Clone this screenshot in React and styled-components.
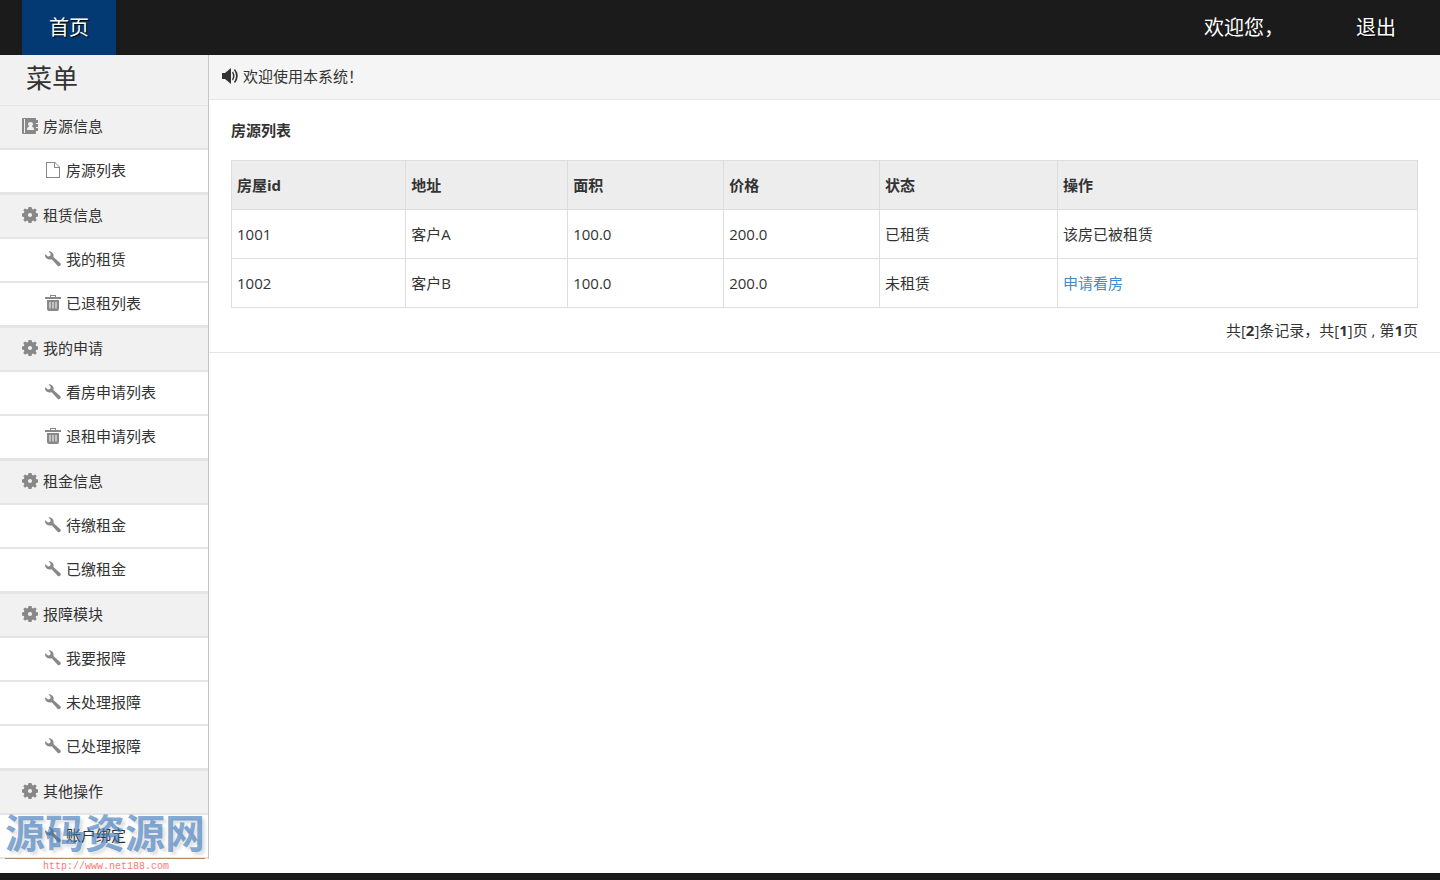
import React from 'react'
import styled, { createGlobalStyle } from 'styled-components'

const GlobalStyle = createGlobalStyle`
  * {
    box-sizing: border-box;
  }
  body {
    margin: 0;
    background: #fff;
    color: #333;
    font-family: "Open Sans", "Noto Sans CJK SC", sans-serif;
    font-size: 15px;
    line-height: 24px;
  }
  a {
    color: inherit;
    text-decoration: none;
  }
`

const Page = styled.div`
  min-height: 100vh;
  display: flex;
  flex-direction: column;
`
const Topbar = styled.header`
  height: 55px;
  padding: 0 22px;
  background: #1b1b1b;
  display: flex;
  justify-content: space-between;
`
const TopLinks = styled.nav`
  display: flex;
`
const TopLink = styled.a`
  padding: 0 ${(props) => props.$pad}px;
  color: #fff;
  background: ${(props) => (props.$active ? '#033a73' : 'transparent')};
  font-size: 20px;
  line-height: 56px;
  height: 55px;
  text-shadow: 1px 1px 1px #000;
`
const Welcome = styled.span`
  padding-right: 50px;
  color: #fff;
  font-size: 20px;
  line-height: 56px;
`
const Body = styled.div`
  flex: 1;
  display: flex;
  align-items: flex-start;
  padding-bottom: 14px;
`
const Sidebar = styled.aside`
  width: 209px;
  flex-shrink: 0;
  position: relative;
  border-right: 1px solid #c6c6c6;
`
const MenuTitle = styled.h1`
  height: 51px;
  margin: 0;
  padding-left: 26px;
  border-bottom: 1px solid #e5e5e5;
  background: #f1f1f1;
  font-size: 26px;
  font-weight: 400;
  line-height: 46px;
`
const MenuList = styled.ul`
  margin: 0;
  padding: 0;
  list-style: none;
`
const MenuGroup = styled.li`
  border-bottom: 1px solid #e5e5e5;
  &:last-child {
    border-bottom: none;
  }
`
const MenuLink = styled.a`
  height: 44px;
  padding: 0 0 2px ${(props) => (props.$group ? 22 : 45)}px;
  border-bottom: 2px solid #e5e5e5;
  background: ${(props) => (props.$group ? '#f1f1f1' : '#fff')};
  display: flex;
  align-items: center;
  gap: 5px;
`
const IconSvg = styled.svg`
  width: 16px;
  height: 16px;
  flex-shrink: 0;
  fill: currentColor;
  color: ${(props) => props.$color || '#888'};
`
const Watermark = styled.div`
  position: absolute;
  left: 5px;
  bottom: -16px;
  width: 200px;
  pointer-events: none;
`
const WatermarkName = styled.div`
  padding-bottom: 7px;
  border-bottom: 1px solid #b08a6c;
  color: rgba(60, 122, 190, 0.64);
  font-family: "Noto Sans CJK SC", sans-serif;
  font-size: 40px;
  font-weight: 700;
  line-height: 40px;
  white-space: nowrap;
  text-shadow: 3px 3px 3px rgba(0, 0, 0, 0.12);
`
const WatermarkUrl = styled.div`
  padding-left: 38px;
  color: #f77;
  font-family: "Liberation Mono", monospace;
  font-size: 10px;
  line-height: 16px;
`
const Content = styled.main`
  flex: 1;
  border-bottom: 1px solid #e5e5e5;
`
const Notice = styled.div`
  height: 45px;
  padding: 0 13px 2px;
  border-bottom: 1px solid #e5e5e5;
  background: #f5f5f5;
  display: flex;
  align-items: center;
  gap: 5px;
`
const Panel = styled.section`
  padding: 18px 22px 10px;
`
const PanelTitle = styled.h2`
  margin: 0 0 18px;
  font-size: 15px;
  font-weight: 700;
  line-height: 24px;
`
const Table = styled.table`
  width: 100%;
  border-collapse: collapse;
  table-layout: fixed;
  th,
  td {
    height: 49px;
    padding: 0 6px 0 5px;
    border: 1px solid #ddd;
    text-align: left;
  }
  th {
    background: #ededed;
    font-weight: 700;
  }
`
const Col = styled.col`
  width: ${(props) => props.$width};
`
const ApplyLink = styled.a`
  color: #428bca;
`
const Pager = styled.p`
  margin: 10px 0 0;
  text-align: right;
`
const Footer = styled.footer`
  height: 7px;
  background: #1b1b1b;
`

const paths = {
  book: 'M1 0h13v2h2v3h-2v1h2v3h-2v1h2v3h-2v2q0 1-1 1H1q-1 0-1-1V1q0-1 1-1zM2 1v14h1V1zM5 12h7v-1q0-2-2-2.500V8q1-1 1-2 0-2-2.500-2T6 6q0 1 1 2v.5Q5 9 5 11z',
  file: 'M1 0h9l5 5v11H1zM2 1v14h12V6H9V1zM10 1v4h4z',
  cog: 'M6.500 0h3l.5 2 1.200.5L13 1.400 14.700 3l-1.100 1.800.5 1.200 1.900.5v3l-1.900.5-.5 1.200 1.100 1.800-1.700 1.700-1.800-1.200-1.200.5-.5 2h-3l-.5-2-1.200-.5L3 14.700 1.300 13l1.100-1.800L1.900 10 0 9.500v-3L1.900 6l.5-1.200L1.300 3 3 1.400l1.800 1.100L6 2zM8 5.900a2.100 2.100 0 1 0 0 4.200 2.100 2.100 0 0 0 0-4.200z',
  wrench: 'M.4 3.200 3 5.400l2.200-.5.5-2.200L3.500.2C6 0 8.700 1.700 8.600 4.700L8.400 6l7 6.200c1.300 1.600-.8 4-2.600 2.700L6.700 8.200C3.800 9.200.2 7.600 0 4.500z',
  trash: 'M5 0h6v2h5v2H0V2h5zM6 1v1h4V1zM2 5h12v9q0 2-2 2H4q-2 0-2-2zM4.500 7v6.500h1V7zM7.500 7v6.500h1V7zM10.500 7v6.500h1V7z',
  sound: 'M0 5h3l6-5v16l-6-5H0zM10 4.500l1-1q3 4.500 0 9l-1-1q2-3.500 0-7zM12 2l1-1q5.500 7 0 14l-1-1q4-6 0-12z',
}

const menu = [
  { name: '房源信息', icon: 'book', children: [['房源列表', 'file']] },
  { name: '租赁信息', icon: 'cog', children: [['我的租赁', 'wrench'], ['已退租列表', 'trash']] },
  { name: '我的申请', icon: 'cog', children: [['看房申请列表', 'wrench'], ['退租申请列表', 'trash']] },
  { name: '租金信息', icon: 'cog', children: [['待缴租金', 'wrench'], ['已缴租金', 'wrench']] },
  { name: '报障模块', icon: 'cog', children: [['我要报障', 'wrench'], ['未处理报障', 'wrench'], ['已处理报障', 'wrench']] },
  { name: '其他操作', icon: 'cog', children: [['账户绑定', 'wrench']] },
]

const columns = [
  ['房屋id', '14.7%'],
  ['地址', '13.65%'],
  ['面积', '13.15%'],
  ['价格', '13.15%'],
  ['状态', '15%'],
  ['操作', 'auto'],
]

const houses = [
  { id: 1001, address: '客户A', area: '100.0', price: '200.0', rented: true },
  { id: 1002, address: '客户B', area: '100.0', price: '200.0', rented: false },
]

const Icon = ({ name, color }) => (
  <IconSvg viewBox="0 0 16 16" $color={color} aria-hidden="true">
    <path fillRule="evenodd" d={paths[name]} />
  </IconSvg>
)

const Menu = () => (
  <Sidebar>
    <MenuTitle>菜单</MenuTitle>
    <MenuList>
      {menu.map((group) => (
        <MenuGroup key={group.name}>
          <MenuLink href="#" $group>
            <Icon name={group.icon} />
            {group.name}
          </MenuLink>
          <MenuList>
            {group.children.map(([name, icon]) => (
              <li key={name}>
                <MenuLink href="#">
                  <Icon name={icon} />
                  {name}
                </MenuLink>
              </li>
            ))}
          </MenuList>
        </MenuGroup>
      ))}
    </MenuList>
    <Watermark>
      <WatermarkName>源码资源网</WatermarkName>
      <WatermarkUrl>http://www.net188.com</WatermarkUrl>
    </Watermark>
  </Sidebar>
)

const HouseTable = () => (
  <Table>
    <colgroup>
      {columns.map(([name, width]) => (
        <Col key={name} $width={width} />
      ))}
    </colgroup>
    <thead>
      <tr>
        {columns.map(([name]) => (
          <th key={name}>{name}</th>
        ))}
      </tr>
    </thead>
    <tbody>
      {houses.map((house) => (
        <tr key={house.id}>
          <td>{house.id}</td>
          <td>{house.address}</td>
          <td>{house.area}</td>
          <td>{house.price}</td>
          <td>{house.rented ? '已租赁' : '未租赁'}</td>
          <td>{house.rented ? '该房已被租赁' : <ApplyLink href="#">申请看房</ApplyLink>}</td>
        </tr>
      ))}
    </tbody>
  </Table>
)

const App = () => {
  return (
    <Page>
      <GlobalStyle />
      <Topbar>
        <TopLinks>
          <TopLink href="#" $active $pad={27}>首页</TopLink>
        </TopLinks>
        <TopLinks>
          <Welcome>欢迎您，</Welcome>
          <TopLink href="#" $pad={22}>退出</TopLink>
        </TopLinks>
      </Topbar>
      <Body>
        <Menu />
        <Content>
          <Notice>
            <Icon name="sound" color="#333" />
            欢迎使用本系统！
          </Notice>
          <Panel>
            <PanelTitle>房源列表</PanelTitle>
            <HouseTable />
            <Pager>
              共[<b>2</b>]条记录，共[<b>1</b>]页 , 第<b>1</b>页
            </Pager>
          </Panel>
        </Content>
      </Body>
      <Footer />
    </Page>
  )
}

export default App
